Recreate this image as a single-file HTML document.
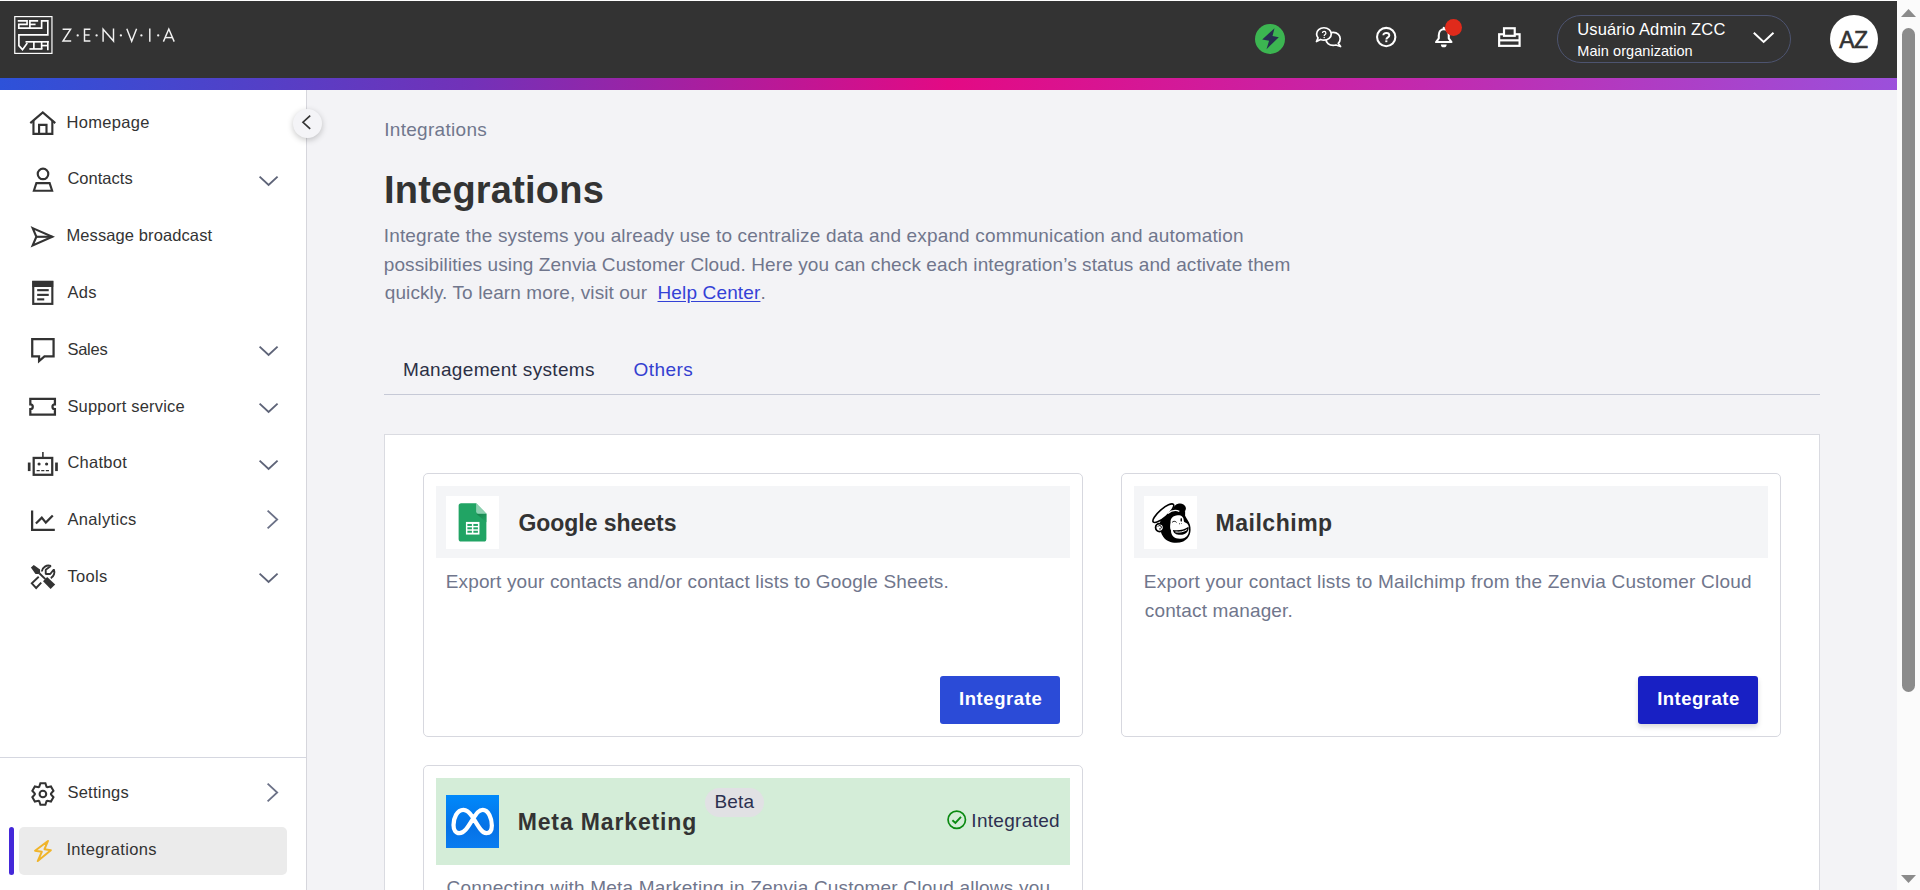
<!DOCTYPE html>
<html lang="en"><head><meta charset="utf-8"><title>Integrations - Zenvia Customer Cloud</title>
<style>

html,body{margin:0;padding:0;background:#f3f3f6;overflow:hidden;}
body{font-family:"Liberation Sans",sans-serif;}
#app{position:relative;width:1920px;height:890px;overflow:hidden;background:#f3f3f6;}
#app>*{position:absolute;box-sizing:border-box;}
.t{white-space:pre;display:block;}
.b{display:block;}
svg{display:block;overflow:visible;}

</style></head>
<body>
<div id="app">
<div class="b" style="left:0px;top:0px;width:1897px;height:1px;background:#ffffff;"></div>
<div class="b" style="left:0px;top:1px;width:1897px;height:77px;background:#333333;"></div>
<div class="b" style="left:0px;top:78px;width:1897px;height:12px;background:linear-gradient(90deg,#2d52d9 0%,#7331b8 25%,#e30a84 50%,#c22aae 75%,#9b50db 100%);"></div>
<div class="b" style="left:1897px;top:0px;width:23px;height:890px;background:#fbfbfb;"></div>
<div class="b" style="left:1902px;top:28px;width:13px;height:664px;background:#8b8b8b;border-radius:6.5px;"></div>
<svg style="left:1901px;top:9px;" width="15" height="8" viewBox="0 0 15 8"><polygon points="7.5,0 15,8 0,8" fill="#8b8b8b"/></svg>
<svg style="left:1901px;top:875px;" width="15" height="8" viewBox="0 0 15 8"><polygon points="0,0 15,0 7.5,8" fill="#8b8b8b"/></svg>
<div class="b" style="left:0px;top:90px;width:306px;height:800px;background:#ffffff;"></div>
<div class="b" style="left:306px;top:90px;width:1px;height:800px;background:#d6d6dc;"></div>
<div class="b" style="left:0px;top:757px;width:306px;height:1px;background:#d5d7e0;"></div>
<div class="b" style="left:19px;top:827px;width:268px;height:48px;background:#ebebeb;border-radius:5px;"></div>
<div class="b" style="left:9px;top:827px;width:5px;height:48px;background:#4428d9;border-radius:2.5px;"></div>
<div class="b" style="left:293px;top:109px;width:29px;height:29px;background:#f4f4f7;border-radius:50%;box-shadow:0 2px 6px rgba(0,0,0,.22);"></div>
<svg style="left:301.9px;top:114.7px;" width="9" height="14.5" viewBox="0 0 9 14.5"><polyline points="8.2,0.6 1,7.25 8.2,13.9" fill="none" stroke="#333" stroke-width="1.7"/></svg>
<svg style="left:259.2px;top:175.5px;" width="19.2" height="9.8" viewBox="0 0 19.2 9.8"><polyline points="0.6,0.6 9.6,9.0 18.599999999999998,0.6" fill="none" stroke="#5e6478" stroke-width="1.9" stroke-linejoin="miter"/></svg>
<svg style="left:259.2px;top:346.3px;" width="19.2" height="9.8" viewBox="0 0 19.2 9.8"><polyline points="0.6,0.6 9.6,9.0 18.599999999999998,0.6" fill="none" stroke="#5e6478" stroke-width="1.9" stroke-linejoin="miter"/></svg>
<svg style="left:259.2px;top:403.1px;" width="19.2" height="9.8" viewBox="0 0 19.2 9.8"><polyline points="0.6,0.6 9.6,9.0 18.599999999999998,0.6" fill="none" stroke="#5e6478" stroke-width="1.9" stroke-linejoin="miter"/></svg>
<svg style="left:259.2px;top:459.7px;" width="19.2" height="9.8" viewBox="0 0 19.2 9.8"><polyline points="0.6,0.6 9.6,9.0 18.599999999999998,0.6" fill="none" stroke="#5e6478" stroke-width="1.9" stroke-linejoin="miter"/></svg>
<svg style="left:259.2px;top:573px;" width="19.2" height="9.8" viewBox="0 0 19.2 9.8"><polyline points="0.6,0.6 9.6,9.0 18.599999999999998,0.6" fill="none" stroke="#5e6478" stroke-width="1.9" stroke-linejoin="miter"/></svg>
<svg style="left:267px;top:510.3px;" width="11" height="19" viewBox="0 0 11 19"><polyline points="0.6,0.6 10.2,9.5 0.6,18.4" fill="none" stroke="#6b7187" stroke-width="1.8" stroke-linejoin="miter"/></svg>
<svg style="left:266.9px;top:783.3px;" width="11" height="19" viewBox="0 0 11 19"><polyline points="0.6,0.6 10.2,9.5 0.6,18.4" fill="none" stroke="#6b7187" stroke-width="1.8" stroke-linejoin="miter"/></svg>
<div class="b" style="left:1557px;top:15px;width:234px;height:48px;border:1px solid #4d5470;border-radius:24px;"></div>
<svg style="left:1752.7px;top:32px;" width="21.3" height="11" viewBox="0 0 21.3 11"><polyline points="0.8,0.8 10.65,10 20.5,0.8" fill="none" stroke="#fff" stroke-width="2"/></svg>
<div class="b" style="left:1830px;top:15px;width:48px;height:48px;background:#ffffff;border-radius:50%;"></div>
<div class="b" style="left:1255px;top:24px;width:30px;height:30px;background:#3cb551;border-radius:50%;"></div>
<div class="b" style="left:1444.6px;top:19.0px;width:17px;height:17px;background:#e02a1b;border-radius:50%;z-index:3;"></div>
<div class="b" style="left:384px;top:394px;width:1436px;height:1px;background:#c6c9d6;"></div>
<div class="b" style="left:384px;top:434px;width:1436px;height:470px;background:#ffffff;border:1px solid #dadbe1;"></div>
<div class="b" style="left:423px;top:473px;width:660px;height:264px;background:#fff;border:1px solid #d7d8df;border-radius:5px;"></div>
<div class="b" style="left:436px;top:486px;width:634px;height:72px;background:#f4f5f7;"></div>
<div class="b" style="left:446px;top:496px;width:53px;height:53px;background:#ffffff;"></div>
<div class="b" style="left:940px;top:676px;width:120px;height:48px;background:#2b4bd7;border-radius:3px;"></div>
<div class="b" style="left:1121px;top:473px;width:660px;height:264px;background:#fff;border:1px solid #d7d8df;border-radius:5px;"></div>
<div class="b" style="left:1134px;top:486px;width:634px;height:72px;background:#f4f5f7;"></div>
<div class="b" style="left:1144px;top:496px;width:53px;height:53px;background:#ffffff;"></div>
<div class="b" style="left:1638px;top:676px;width:120px;height:48px;background:#1820c4;border-radius:3px;box-shadow:0 3px 5px rgba(0,0,0,.15);"></div>
<div class="b" style="left:423px;top:765px;width:660px;height:200px;background:#fff;border:1px solid #d7d8df;border-radius:5px;"></div>
<div class="b" style="left:436px;top:778px;width:634px;height:86.6px;background:#d4edd8;"></div>
<div class="b" style="left:446px;top:795px;width:53px;height:53px;background:linear-gradient(180deg,#0089fb 0%,#0572e6 60%,#0a7cf0 100%);"></div>
<div class="b" style="left:704.7px;top:787.8px;width:59.3px;height:29.2px;background:#e1e1e4;border-radius:15px;"></div>
<svg style="left:10px;top:12px;" width="48" height="46" viewBox="0 0 929 890" ><rect x="92" y="89" width="720" height="712" fill="none" stroke="#fff" stroke-width="23"/>
<g fill="none" stroke="#fff" stroke-width="32" stroke-linejoin="miter" stroke-linecap="butt">
<polyline points="150,172 330,172 330,240 170,240 170,312 612,312 612,172 732,172 732,442 172,442 172,650 242,728 335,600"/>
<polyline points="545,172 385,172 385,312"/>
<line x1="385" y1="240" x2="495" y2="240"/>
<line x1="300" y1="577" x2="750" y2="577"/>
<line x1="462" y1="577" x2="462" y2="715"/>
<line x1="375" y1="715" x2="628" y2="715"/>
<line x1="612" y1="577" x2="612" y2="715"/>
<line x1="732" y1="560" x2="732" y2="740"/>
<line x1="612" y1="650" x2="732" y2="650"/>
</g></svg>
<svg style="left:56px;top:20px;" width="130" height="32" viewBox="0 0 130 32" ><g fill="none" stroke="#f2f2f2" stroke-width="1.45" stroke-linejoin="miter" stroke-linecap="butt">
<polyline points="6.60,9.20 14.60,9.20 7.00,21.00 15.20,21.00"/>
<polyline points="34.40,9.20 28.50,9.20 28.50,21.00 34.40,21.00"/><line x1="28.5" y1="15.0" x2="33.599999999999994" y2="15.0"/>
<polyline points="47.10,21.70 47.10,9.20 57.50,21.00 57.50,8.50"/>
<polyline points="70.80,8.80 75.70,21.30 80.60,8.80"/>
<line x1="93.80000000000001" y1="8.5" x2="93.80000000000001" y2="21.700000000000003"/>
<polyline points="107.40,21.60 112.80,9.00 118.20,21.60"/><line x1="109.19999999999999" y1="17.6" x2="116.4" y2="17.6"/>
</g>
<g fill="#f2f2f2"><circle cx="21.70" cy="15.40" r="1.15"/><circle cx="40.60" cy="15.40" r="1.15"/><circle cx="64.90" cy="15.40" r="1.15"/><circle cx="85.40" cy="15.40" r="1.15"/><circle cx="102.20" cy="15.40" r="1.15"/></g></svg>
<svg style="left:1245px;top:14px;" width="110" height="50" viewBox="0 0 1920 873" ><polygon points="515,250 300,445 420,465 375,615 590,405 480,385" fill="#272d4f"/>
<g fill="#333" stroke="#fff" stroke-width="30" stroke-linejoin="round">
<path d="M1540,322 C1615,322 1662,372 1662,432 C1662,465 1648,492 1628,512 L1668,568 L1588,542 C1572,547 1556,549 1540,549 C1468,549 1412,498 1412,435 C1412,372 1468,322 1540,322 Z"/>
<path d="M1378,240 C1452,240 1506,290 1506,348 C1506,408 1450,455 1378,455 C1356,455 1336,451 1318,444 L1248,482 L1275,416 C1259,397 1250,373 1250,348 C1250,290 1304,240 1378,240 Z"/>
</g>
<path d="M1353,332 C1353,296 1412,296 1412,334 C1412,358 1382,356 1382,382" fill="none" stroke="#fff" stroke-width="22"/><circle cx="1382" cy="410" r="13" fill="#fff"/></svg>
<svg style="left:1365px;top:14px;" width="110" height="50" viewBox="0 0 1920 873" ><circle cx="370" cy="402" r="160" fill="none" stroke="#fff" stroke-width="36"/>
<path d="M320,372 C320,318 424,318 424,374 C424,410 372,408 372,446" fill="none" stroke="#fff" stroke-width="34"/><rect x="354" y="460" width="36" height="32" fill="#fff"/>
<g fill="none" stroke="#fff" stroke-width="36" stroke-linejoin="round" stroke-linecap="round">
<path d="M1240,490 L1510,490 L1462,425 L1462,370 C1462,312 1425,266 1375,266 C1325,266 1288,312 1288,370 L1288,425 Z"/>
<line x1="1375" y1="240" x2="1375" y2="262"/>
</g>
<path d="M1325,532 A50,50 0 0 0 1425,532 Z" fill="#fff"/></svg>
<svg style="left:1480px;top:14px;" width="110" height="50" viewBox="0 0 1920 873" ><g fill="#333" stroke="#fff" stroke-width="38" stroke-linejoin="miter">
<rect x="334" y="354" width="357" height="202"/>
<line x1="334" y1="460" x2="691" y2="460"/>
<rect x="419" y="249" width="187" height="132"/>
</g></svg>
<svg style="left:22px;top:102px;" width="40" height="100" viewBox="0 0 356 890" ><g fill="none" stroke="#333333" stroke-width="19" stroke-linejoin="miter" stroke-linecap="butt">
<polyline points="74,188 185,92 296,188"/>
<polyline points="102,165 102,284 270,284 270,165"/>
<polyline points="152,284 152,204 218,204 218,284"/>
<circle cx="187" cy="640" r="47"/>
<polygon points="128,722 246,722 268,790 106,790"/>
</g></svg>
<svg style="left:22px;top:216px;" width="40" height="100" viewBox="0 0 356 890" ><g fill="none" stroke="#333333" stroke-width="19" stroke-linejoin="miter" stroke-linecap="butt">
<polygon points="95,108 270,185 95,262 128,185"/>
<line x1="128" y1="185" x2="270" y2="185"/>
<rect x="100" y="586" width="170" height="196"/>
<line x1="135" y1="660" x2="238" y2="660"/><line x1="135" y1="702" x2="238" y2="702"/><line x1="135" y1="742" x2="198" y2="742"/>
</g><rect x="92" y="578" width="186" height="54" fill="#333333"/></svg>
<svg style="left:22px;top:330px;" width="40" height="100" viewBox="0 0 356 890" ><g fill="none" stroke="#333333" stroke-width="20" stroke-linejoin="miter" stroke-linecap="butt">
<path d="M91,81 H281 V234 H200 L152,276 V234 H91 Z"/>
<path d="M74,614 H293 V661 A22,22 0 0 0 293,705 V753 H74 V705 A22,22 0 0 0 74,661 Z"/>
</g></svg>
<svg style="left:22px;top:444px;" width="40" height="100" viewBox="0 0 356 890" ><g fill="none" stroke="#333333" stroke-width="20" stroke-linejoin="miter" stroke-linecap="butt">
<line x1="186" y1="72" x2="186" y2="120" stroke-width="14"/>
<rect x="104" y="124" width="165" height="150"/>
<line x1="130" y1="238" x2="242" y2="238" stroke-width="11" stroke-dasharray="28,13"/>
<polyline points="90,592 90,765 292,765"/>
<polyline points="124,707 176,655 212,700 274,636"/>
</g>
<rect x="52" y="165" width="24" height="76" fill="#333333"/><rect x="295" y="165" width="24" height="76" fill="#333333"/>
<circle cx="152" cy="178" r="14" fill="#333333"/><circle cx="219" cy="178" r="14" fill="#333333"/></svg>
<svg style="left:22px;top:556px;" width="40" height="40" viewBox="0 0 890 890" ><polygon points="198,255 262,198 402,300 402,362 372,398 300,398" fill="#333333"/>
<line x1="385" y1="385" x2="520" y2="515" stroke="#333333" stroke-width="44"/>
<polygon points="468,562 560,468 738,632 636,736" fill="#333333"/>
<g fill="none" stroke="#333333" stroke-width="42" stroke-linejoin="miter" stroke-linecap="butt">
<polyline points="372,462 218,608 315,712 428,590"/>
<path d="M440,345 A150,150 0 0 1 640,222 L528,305 L528,400 L628,400 L708,300 A150,150 0 0 1 640,492" stroke-linejoin="bevel"/>
</g></svg>
<svg style="left:22px;top:774px;" width="40" height="40" viewBox="0 0 890 890" ><g fill="none" stroke="#333333" stroke-width="46" stroke-linejoin="miter">
<polygon points="384.0,284.2 409.5,206.4 520.5,206.4 546.0,284.2 563.7,294.5 643.9,277.6 699.4,373.8 644.7,434.8 644.7,455.2 699.4,516.2 643.9,612.4 563.7,595.5 546.0,605.8 520.5,683.6 409.5,683.6 384.0,605.8 366.3,595.5 286.1,612.4 230.6,516.2 285.3,455.2 285.3,434.8 230.6,373.8 286.1,277.6 366.3,294.5"/>
<circle cx="465" cy="445" r="74"/></g></svg>
<svg style="left:22px;top:831px;" width="40" height="40" viewBox="0 0 890 890" ><polygon points="578,222 290,440 440,463 350,668 642,428 500,406" fill="none" stroke="#f0b429" stroke-width="44" stroke-linejoin="round"/></svg>
<svg style="left:440px;top:490px;" width="65" height="65" viewBox="0 0 890 890" ><defs><linearGradient id="sg" x1="0" y1="0" x2="1" y2="1"><stop offset="0" stop-color="#17804b"/><stop offset="1" stop-color="#21a464"/></linearGradient></defs>
<path d="M290,180 H495 L635,325 V670 A35,35 0 0 1 600,705 H290 A35,35 0 0 1 255,670 V215 A35,35 0 0 1 290,180 Z" fill="#21a464"/>
<path d="M495,325 H635 V440 Z" fill="url(#sg)"/>
<path d="M495,180 L635,325 H525 A30,30 0 0 1 495,295 Z" fill="#8ed1b1"/>
<rect x="355" y="437" width="185" height="173" fill="#fff"/>
<g fill="#21a464"><rect x="375" y="465" width="62" height="27"/><rect x="457" y="465" width="62" height="27"/>
<rect x="375" y="511" width="62" height="27"/><rect x="457" y="511" width="62" height="27"/>
<rect x="375" y="558" width="62" height="27"/><rect x="457" y="558" width="62" height="27"/></g></svg>
<svg style="left:1138px;top:490px;" width="65" height="65" viewBox="0 0 890 890" ><g>
<path d="M300,480 C295,400 360,300 470,285 C540,275 610,295 640,345 C660,385 700,430 712,480 C735,570 710,660 620,705 C520,745 400,720 345,640 C310,590 302,540 300,480 Z" fill="#000"/>
<ellipse cx="570" cy="255" rx="86" ry="70" fill="#000" transform="rotate(-8 570 255)"/>
<polygon points="470,250 645,290 645,370 400,345" fill="#000"/>
<ellipse cx="347" cy="318" rx="183" ry="56" fill="#fff" stroke="#000" stroke-width="22" transform="rotate(-41 347 318)"/>
<path d="M408,322 C452,284 515,270 566,292" fill="none" stroke="#fff" stroke-width="17"/>
<circle cx="296" cy="514" r="55" fill="#fff" stroke="#000" stroke-width="24"/>
<path d="M272,502 C282,478 320,482 320,510 C320,532 300,540 288,530" fill="none" stroke="#000" stroke-width="13"/>
<path d="M446,445 C440,392 480,350 545,347 C598,345 626,372 627,420 C627,434 640,442 655,450 C688,466 703,500 697,540 C704,608 660,664 585,668 C502,673 449,623 452,555 C434,525 439,480 446,445 Z" fill="#fff"/>
<path d="M478,546 C550,560 630,545 692,503 C703,562 652,614 580,614 C520,614 484,587 478,546 Z" fill="#000"/>
<path d="M512,574 C572,584 630,570 672,542" fill="none" stroke="#fff" stroke-width="13"/>
<ellipse cx="592" cy="410" rx="11" ry="25" fill="#000"/>
<path d="M468,442 C484,424 512,424 528,444" fill="none" stroke="#000" stroke-width="13"/>
<circle cx="568" cy="462" r="7" fill="#000"/><circle cx="593" cy="458" r="6" fill="#000"/>
</g></svg>
<svg style="left:440px;top:789px;" width="65" height="65" viewBox="0 0 890 890" ><path d="M445,382 C400,312 362,285 320,285 C232,285 185,400 185,492 C185,562 215,605 266,605 C330,605 372,540 445,420 C505,325 535,285 586,285 C662,285 710,400 710,500 C710,566 684,605 634,605 C580,605 540,540 445,382 Z" fill="none" stroke="#fff" stroke-width="58" stroke-linejoin="round"/></svg>
<svg style="left:947px;top:810px;" width="19.5" height="19.5" viewBox="0 0 19.5 19.5" ><circle cx="9.75" cy="9.75" r="8.7" fill="none" stroke="#0b8a12" stroke-width="1.7"/>
<polyline points="5.4,10.2 8.4,13 14,6.9" fill="none" stroke="#0b8a12" stroke-width="1.9"/></svg>
<span class="t" style="left:66.40px;top:112.00px;font-size:16.5px;line-height:21px;color:#333333;letter-spacing:0.322px;">Homepage</span>
<span class="t" style="left:67.40px;top:168.00px;font-size:16.5px;line-height:21px;color:#333333;letter-spacing:0.019px;">Contacts</span>
<span class="t" style="left:66.40px;top:225.00px;font-size:16.5px;line-height:21px;color:#333333;letter-spacing:0.105px;">Message broadcast</span>
<span class="t" style="left:67.40px;top:282.00px;font-size:16.5px;line-height:21px;color:#333333;letter-spacing:0.359px;">Ads</span>
<span class="t" style="left:67.40px;top:339.00px;font-size:16.5px;line-height:21px;color:#333333;letter-spacing:-0.231px;">Sales</span>
<span class="t" style="left:67.40px;top:396.00px;font-size:16.5px;line-height:21px;color:#333333;letter-spacing:0.188px;">Support service</span>
<span class="t" style="left:67.40px;top:452.00px;font-size:16.5px;line-height:21px;color:#333333;letter-spacing:0.282px;">Chatbot</span>
<span class="t" style="left:67.40px;top:509.00px;font-size:16.5px;line-height:21px;color:#333333;letter-spacing:0.366px;">Analytics</span>
<span class="t" style="left:67.40px;top:566.00px;font-size:16.5px;line-height:21px;color:#333333;letter-spacing:0.308px;">Tools</span>
<span class="t" style="left:67.40px;top:782.00px;font-size:16.5px;line-height:21px;color:#333333;letter-spacing:0.247px;">Settings</span>
<span class="t" style="left:66.40px;top:839.00px;font-size:16.5px;line-height:21px;color:#333333;letter-spacing:0.357px;">Integrations</span>
<span class="t" style="left:1577.30px;top:19.00px;font-size:16.5px;line-height:21px;color:#ffffff;letter-spacing:0.138px;">Usuário Admin ZCC</span>
<span class="t" style="left:1577.30px;top:42.00px;font-size:14.5px;line-height:18px;color:#ffffff;letter-spacing:0.057px;">Main organization</span>
<span class="t" style="left:1839.20px;top:26.00px;font-size:23px;line-height:29px;color:#333333;letter-spacing:-0.641px;-webkit-text-stroke:0.6px #333;">AZ</span>
<span class="t" style="left:384.20px;top:118.00px;font-size:19px;line-height:24px;color:#70778d;letter-spacing:0.301px;">Integrations</span>
<span class="t" style="left:384.00px;top:166.00px;font-size:38px;line-height:48px;color:#333333;font-weight:700;letter-spacing:0.216px;">Integrations</span>
<span class="t" style="left:383.75px;top:224.00px;font-size:19px;line-height:24px;color:#70768c;letter-spacing:0.156px;">Integrate the systems you already use to centralize data and expand communication and automation</span>
<span class="t" style="left:383.75px;top:253.00px;font-size:19px;line-height:24px;color:#70768c;letter-spacing:0.099px;">possibilities using Zenvia Customer Cloud. Here you can check each integration’s status and activate them</span>
<span class="t" style="left:384.75px;top:281.00px;font-size:19px;line-height:24px;color:#70768c;letter-spacing:0.099px;">quickly. To learn more, visit our</span>
<span class="t" style="left:657.50px;top:281.00px;font-size:19px;line-height:24px;color:#3341d6;letter-spacing:0.144px;text-decoration:underline;text-underline-offset:2px;">Help Center</span>
<span class="t" style="left:760.50px;top:281.00px;font-size:19px;line-height:24px;color:#70768c;">.</span>
<span class="t" style="left:403.00px;top:358.00px;font-size:19px;line-height:24px;color:#2b2f45;letter-spacing:0.332px;">Management systems</span>
<span class="t" style="left:633.50px;top:358.00px;font-size:19px;line-height:24px;color:#3340d0;letter-spacing:0.446px;">Others</span>
<span class="t" style="left:518.50px;top:509.00px;font-size:23px;line-height:29px;color:#333333;font-weight:700;letter-spacing:-0.041px;">Google sheets</span>
<span class="t" style="left:445.70px;top:570.00px;font-size:19px;line-height:24px;color:#70768c;letter-spacing:0.152px;">Export your contacts and/or contact lists to Google Sheets.</span>
<span class="t" style="left:959.00px;top:687.00px;font-size:18.5px;line-height:23px;color:#ffffff;font-weight:700;letter-spacing:0.570px;">Integrate</span>
<span class="t" style="left:1215.60px;top:509.00px;font-size:23px;line-height:29px;color:#333333;font-weight:700;letter-spacing:0.511px;">Mailchimp</span>
<span class="t" style="left:1143.80px;top:570.00px;font-size:19px;line-height:24px;color:#70768c;letter-spacing:0.211px;">Export your contact lists to Mailchimp from the Zenvia Customer Cloud</span>
<span class="t" style="left:1144.80px;top:599.00px;font-size:19px;line-height:24px;color:#70768c;letter-spacing:0.148px;">contact manager.</span>
<span class="t" style="left:1657.20px;top:687.00px;font-size:18.5px;line-height:23px;color:#ffffff;font-weight:700;letter-spacing:0.483px;">Integrate</span>
<span class="t" style="left:517.70px;top:808.00px;font-size:23px;line-height:29px;color:#333333;font-weight:700;letter-spacing:0.863px;">Meta Marketing</span>
<span class="t" style="left:714.60px;top:790.00px;font-size:19px;line-height:24px;color:#2c3150;letter-spacing:0.094px;">Beta</span>
<span class="t" style="left:971.30px;top:809.00px;font-size:19px;line-height:24px;color:#2d3050;letter-spacing:0.311px;">Integrated</span>
<span class="t" style="left:446.60px;top:876.30px;font-size:19px;line-height:24px;color:#70768c;letter-spacing:0.201px;">Connecting with Meta Marketing in Zenvia Customer Cloud allows you</span>
</div>
</body></html>
